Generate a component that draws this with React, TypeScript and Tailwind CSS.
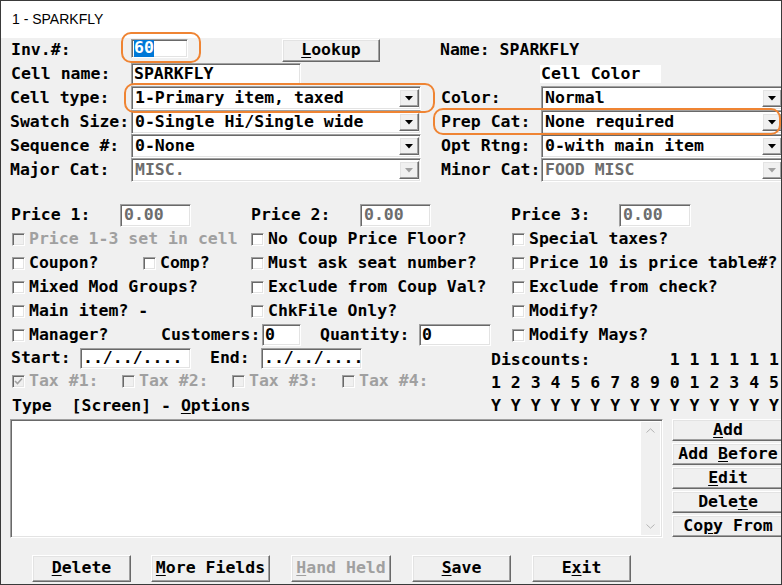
import React from "react";

const F = "font-['DejaVu_Sans_Mono',monospace] font-bold text-[16.5px] leading-none";
const sunken =
  "border border-t-[#a0a0a0] border-l-[#a0a0a0] border-b-white border-r-white shadow-[inset_1px_1px_0_#696969,inset_-1px_-1px_0_#e3e3e3]";
const raised =
  "border border-t-white border-l-white border-b-[#696969] border-r-[#696969] shadow-[inset_-1px_-1px_0_#a0a0a0,inset_1px_1px_0_#e3e3e3]";

function Arrow({ gray }: { gray?: boolean }) {
  return (
    <svg width="8" height="5" viewBox="0 0 8 5">
      <polygon points="0,0 8,0 4,4.5" fill={gray ? "#a0a0a0" : "#000"} />
    </svg>
  );
}

function Combo({ w, text, disabled }: { w: string; text: string; disabled?: boolean }) {
  return (
    <div className={`${sunken} bg-white ${w} h-[24px] shrink-0 flex items-center pl-[3px]`}>
      <span className={`flex-1 whitespace-pre ${disabled ? "text-[#6d6d6d]" : ""}`}>{text}</span>
      <div className={`${raised} bg-[#f0f0f0] w-[20px] h-[18px] mr-[1px] flex items-center justify-center shrink-0`}>
        <Arrow gray={disabled} />
      </div>
    </div>
  );
}

function Cb({ checked, disabled }: { checked?: boolean; disabled?: boolean }) {
  return (
    <div
      className={`w-[13px] h-[13px] shrink-0 ${disabled ? "bg-[#f0f0f0]" : "bg-white"} border border-t-[#a0a0a0] border-l-[#a0a0a0] border-b-white border-r-white shadow-[inset_1px_1px_0_#696969,inset_-1px_-1px_0_#e3e3e3] flex items-center justify-center`}
    >
      {checked && (
        <svg width="9" height="9" viewBox="0 0 9 9">
          <polyline points="1,4 3.5,6.5 8,1.5" fill="none" stroke={disabled ? "#a0a0a0" : "#000"} strokeWidth="1.6" />
        </svg>
      )}
    </div>
  );
}

function CbL({ label, disabled, checked, w }: { label: string; disabled?: boolean; checked?: boolean; w?: string }) {
  return (
    <div className={`flex items-center shrink-0 ${w ?? ""}`}>
      <Cb disabled={disabled} checked={checked} />
      <span className={`ml-[4px] whitespace-pre ${disabled ? "text-[#a0a0a0]" : ""}`}>{label}</span>
    </div>
  );
}

function Btn({ w, children, disabled, h }: { w: string; children: React.ReactNode; disabled?: boolean; h?: string }) {
  return (
    <div
      className={`${raised} bg-[#f0f0f0] ${w} ${h ?? "h-full"} shrink-0 flex items-center justify-center whitespace-pre ${disabled ? "text-[#a0a0a0]" : ""}`}
    >
      {children}
    </div>
  );
}

const U = ({ c }: { c: string }) => <span className="underline underline-offset-[2px]">{c}</span>;

export default function App() {
  const digits = ["1", "2", "3", "4", "5", "6", "7", "8", "9", "0", "1", "2", "3", "4", "5"];
  return (
    <div className="relative w-[782px] h-[585px] overflow-hidden bg-[#f0f0f0] border border-[#3a3a3a] flex flex-col text-black">
      <div className="h-[37px] shrink-0 bg-white flex items-center pl-[11px] font-['Liberation_Sans',sans-serif] text-[14px]">
        1 - SPARKFLY
      </div>
      <div className={`flex flex-col ${F}`}>
        {/* Row A */}
        <div className="flex items-center h-[24px]">
          <span className="ml-[10px] w-[120px] shrink-0">Inv.#:</span>
          <div className={`${sunken} bg-white w-[57px] h-[19px] shrink-0 flex items-center pl-[2px] mt-[-3px]`}>
            <span className="bg-[#0078d7] text-white">60</span>
          </div>
          <Btn w="w-[98px] ml-[94px]" h="h-[23px]">
            <U c="L" />
            ookup
          </Btn>
          <span className="ml-[60px] whitespace-pre shrink-0">Name: SPARKFLY</span>
        </div>
        {/* Row B */}
        <div className="flex items-center h-[24px]">
          <span className="ml-[10px] w-[120px] shrink-0">Cell name:</span>
          <div className={`${sunken} bg-white w-[170px] h-[22px] shrink-0 flex items-center pl-[2px]`}>SPARKFLY</div>
          <div className="ml-[239px] w-[121px] h-[18px] shrink-0 bg-white flex items-center pl-[1px] whitespace-pre">Cell Color</div>
        </div>
        {/* Combos */}
        {[
          ["Cell type:", "1-Primary item, taxed", "Color:", "Normal", false],
          ["Swatch Size:", "0-Single Hi/Single wide", "Prep Cat:", "None required", false],
          ["Sequence #:", "0-None", "Opt Rtng:", "0-with main item", false],
          ["Major Cat:", "MISC.", "Minor Cat:", "FOOD MISC", true],
        ].map(([l1, v1, l2, v2, d], i) => (
          <div key={i} className="flex items-center h-[24px]">
            <span className="ml-[9px] w-[121px] shrink-0 whitespace-pre">{l1 as string}</span>
            <Combo w="w-[290px]" text={v1 as string} disabled={d as boolean} />
            <span className="ml-[20px] w-[100px] shrink-0 whitespace-pre">{l2 as string}</span>
            <Combo w="w-[243px]" text={v2 as string} disabled={d as boolean} />
          </div>
        ))}
        <div className="h-[22px] shrink-0" />
        {/* Price row */}
        <div className="flex items-center h-[23px]">
          <span className="ml-[10px] w-[109px] shrink-0 whitespace-pre">Price 1:</span>
          <div className={`${sunken} bg-white w-[71px] h-[23px] shrink-0 flex items-center pl-[3px] text-[#6d6d6d]`}>0.00</div>
          <span className="ml-[60px] w-[109px] shrink-0 whitespace-pre">Price 2:</span>
          <div className={`${sunken} bg-white w-[71px] h-[23px] shrink-0 flex items-center pl-[3px] text-[#6d6d6d]`}>0.00</div>
          <span className="ml-[80px] w-[108px] shrink-0 whitespace-pre">Price 3:</span>
          <div className={`${sunken} bg-white w-[72px] h-[23px] shrink-0 flex items-center pl-[3px] text-[#6d6d6d]`}>0.00</div>
        </div>
        {/* Checkbox rows */}
        <div className="flex items-center h-[24px]">
          <div className="ml-[11px] w-[239px] shrink-0 flex items-center">
            <CbL label="Price 1-3 set in cell" disabled />
          </div>
          <div className="w-[261px] shrink-0 flex items-center">
            <CbL label="No Coup Price Floor?" />
          </div>
          <CbL label="Special taxes?" />
        </div>
        <div className="flex items-center h-[24px]">
          <div className="ml-[11px] w-[239px] shrink-0 flex items-center">
            <CbL label="Coupon?" w="w-[131px]" />
            <CbL label="Comp?" />
          </div>
          <div className="w-[261px] shrink-0 flex items-center">
            <CbL label="Must ask seat number?" />
          </div>
          <CbL label="Price 10 is price table#?" />
        </div>
        <div className="flex items-center h-[24px]">
          <div className="ml-[11px] w-[239px] shrink-0 flex items-center">
            <CbL label="Mixed Mod Groups?" />
          </div>
          <div className="w-[261px] shrink-0 flex items-center">
            <CbL label="Exclude from Coup Val?" />
          </div>
          <CbL label="Exclude from check?" />
        </div>
        <div className="flex items-center h-[24px]">
          <div className="ml-[11px] w-[239px] shrink-0 flex items-center">
            <CbL label="Main item? -" />
          </div>
          <div className="w-[261px] shrink-0 flex items-center">
            <CbL label="ChkFile Only?" />
          </div>
          <CbL label="Modify?" />
        </div>
        <div className="flex items-center h-[24px]">
          <div className="ml-[11px] w-[500px] shrink-0 flex items-center">
            <CbL label="Manager?" w="w-[149px]" />
            <span className="w-[101px] shrink-0">Customers:</span>
            <div className={`${sunken} bg-white w-[39px] h-[22px] shrink-0 flex items-center pl-[2px]`}>0</div>
            <span className="ml-[19px] w-[99px] shrink-0">Quantity:</span>
            <div className={`${sunken} bg-white w-[72px] h-[22px] shrink-0 flex items-center pl-[2px]`}>0</div>
          </div>
          <CbL label="Modify Mays?" />
        </div>
        {/* Start / Tax / Type + discounts */}
        <div className="flex h-[70px] shrink-0">
          <div className="w-[490px] flex flex-col shrink-0">
            <div className="flex items-center h-[23px]">
              <span className="ml-[10px] w-[69px] shrink-0">Start:</span>
              <div className={`${sunken} bg-white w-[111px] h-[21px] shrink-0 flex items-center pl-[2px]`}>../../....</div>
              <span className="ml-[19px] w-[51px] shrink-0">End:</span>
              <div className={`${sunken} bg-white w-[101px] h-[21px] shrink-0 flex items-center pl-[2px]`}>../../....</div>
            </div>
            <div className="flex items-center h-[23px] ml-[11px]">
              <CbL label="Tax #1:" disabled checked w="w-[110px]" />
              <CbL label="Tax #2:" disabled w="w-[110px]" />
              <CbL label="Tax #3:" disabled w="w-[110px]" />
              <CbL label="Tax #4:" disabled w="w-[110px]" />
            </div>
            <div className="flex items-center h-[24px] pt-[3px] ml-[11px] whitespace-pre">
              {"Type  [Screen] - "}
              <U c="O" />
              ptions
            </div>
          </div>
          <div className="grid grid-cols-[repeat(15,19.86px)] auto-rows-[23px] items-center pt-[2px] h-[70px] overflow-hidden">
            <span className="col-span-9">Discounts:</span>
            {digits.slice(9).map((_, i) => (
              <span key={"a" + i}>1</span>
            ))}
            {digits.map((d, i) => (
              <span key={"b" + i}>{d}</span>
            ))}
            {digits.map((_, i) => (
              <span key={"c" + i}>Y</span>
            ))}
          </div>
        </div>
        {/* Listbox + side buttons */}
        <div className="flex mt-[2px] h-[119px] shrink-0">
          <div className={`${sunken} bg-white ml-[9px] w-[653px] h-full shrink-0 flex justify-end p-[2px]`}>
            <div className="w-[19px] h-full bg-[#f0f0f0] flex flex-col justify-between items-center py-[6px]">
              <svg width="9" height="5" viewBox="0 0 9 5">
                <polyline points="0.5,4.5 4.5,0.8 8.5,4.5" fill="none" stroke="#b4b4b4" strokeWidth="1" />
              </svg>
              <svg width="9" height="5" viewBox="0 0 9 5">
                <polyline points="0.5,0.5 4.5,4.2 8.5,0.5" fill="none" stroke="#b4b4b4" strokeWidth="1" />
              </svg>
            </div>
          </div>
          <div className="ml-[9px] flex flex-col gap-[2px]">
            <Btn w="w-[112px]" h="h-[22px]">
              <U c="A" />
              dd
            </Btn>
            <Btn w="w-[112px]" h="h-[22px]">
              {"Add "}
              <U c="B" />
              efore
            </Btn>
            <Btn w="w-[112px]" h="h-[22px]">
              <U c="E" />
              dit
            </Btn>
            <Btn w="w-[112px]" h="h-[22px]">
              Dele
              <U c="t" />e
            </Btn>
            <Btn w="w-[112px]" h="h-[22px]">
              Co
              <U c="p" />
              y From
            </Btn>
          </div>
        </div>
        {/* Bottom buttons */}
        <div className="flex mt-[17px] h-[27px] shrink-0">
          <Btn w="w-[99px] ml-[31px]">
            <U c="D" />
            elete
          </Btn>
          <Btn w="w-[119px] ml-[20px]">
            <U c="M" />
            ore Fields
          </Btn>
          <Btn w="w-[100px] ml-[21px]" disabled>
            <U c="H" />
            and Held
          </Btn>
          <Btn w="w-[99px] ml-[21px]">
            <U c="S" />
            ave
          </Btn>
          <Btn w="w-[99px] ml-[21px]">
            E<U c="x" />
            it
          </Btn>
        </div>
      </div>
      {/* Orange annotations */}
      <div className="absolute left-[120px] top-[31px] w-[80px] h-[31px] border-[2.5px] border-[#ef8433] rounded-[10px]" />
      <div className="absolute left-[123px] top-[82px] w-[311px] h-[30px] border-[2.5px] border-[#ef8433] rounded-[10px]" />
      <div className="absolute left-[432px] top-[107px] w-[348px] h-[27px] border-[2.5px] border-[#ef8433] rounded-[10px]" />
    </div>
  );
}
